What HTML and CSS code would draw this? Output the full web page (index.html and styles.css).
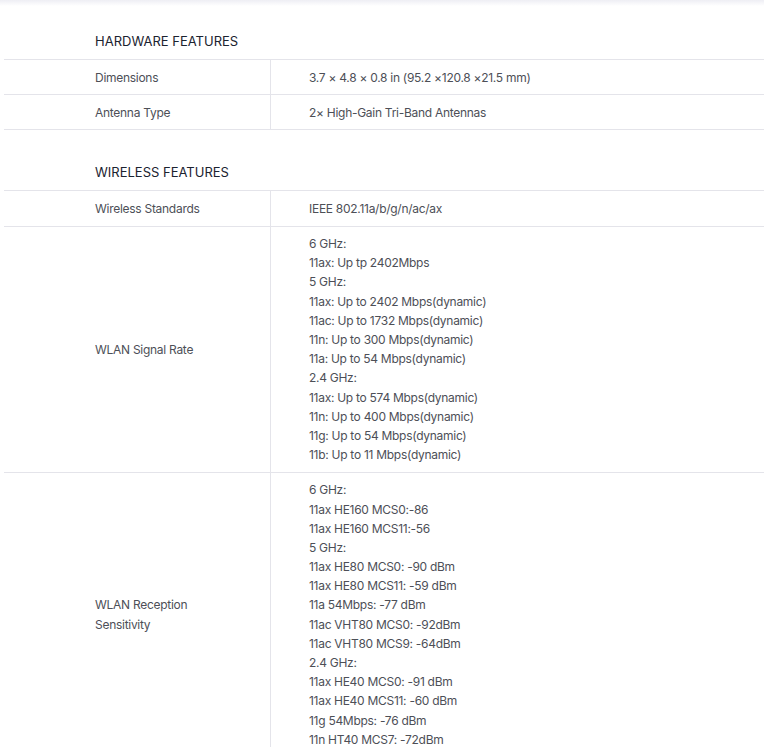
FILE: index.html
```html
<!DOCTYPE html>
<html lang="en">
<head>
    <meta charset="UTF-8">
    <meta name="viewport" content="width=device-width, initial-scale=1.0">
    <title>Specifications</title>
    <link rel="stylesheet" href="styles.css">
</head>
<body>
    <div class="top-shade"></div>
    <div class="specs">
        <section class="spec-group">
            <h3 class="spec-title">HARDWARE FEATURES</h3>
            <table class="spec-table">
                <tr>
                    <td class="spec-name">Dimensions</td>
                    <td class="spec-value">3.7 × 4.8 × 0.8 in (95.2 ×120.8 ×21.5 mm)</td>
                </tr>
                <tr>
                    <td class="spec-name">Antenna Type</td>
                    <td class="spec-value">2× High-Gain Tri-Band Antennas</td>
                </tr>
            </table>
        </section>

        <section class="spec-group">
            <h3 class="spec-title">WIRELESS FEATURES</h3>
            <table class="spec-table">
                <tr>
                    <td class="spec-name">Wireless Standards</td>
                    <td class="spec-value">IEEE 802.11a/b/g/n/ac/ax</td>
                </tr>
                <tr>
                    <td class="spec-name">WLAN Signal Rate</td>
                    <td class="spec-value">
                        6 GHz:<br>
                        11ax: Up tp 2402Mbps<br>
                        5 GHz:<br>
                        11ax: Up to 2402 Mbps(dynamic)<br>
                        11ac: Up to 1732 Mbps(dynamic)<br>
                        11n: Up to 300 Mbps(dynamic)<br>
                        11a: Up to 54 Mbps(dynamic)<br>
                        2.4 GHz:<br>
                        11ax: Up to 574 Mbps(dynamic)<br>
                        11n: Up to 400 Mbps(dynamic)<br>
                        11g: Up to 54 Mbps(dynamic)<br>
                        11b: Up to 11 Mbps(dynamic)
                    </td>
                </tr>
                <tr>
                    <td class="spec-name">WLAN Reception<br>Sensitivity</td>
                    <td class="spec-value">
                        6 GHz:<br>
                        11ax HE160 MCS0:-86<br>
                        11ax HE160 MCS11:-56<br>
                        5 GHz:<br>
                        11ax HE80 MCS0: -90 dBm<br>
                        11ax HE80 MCS11: -59 dBm<br>
                        11a 54Mbps: -77 dBm<br>
                        11ac VHT80 MCS0: -92dBm<br>
                        11ac VHT80 MCS9: -64dBm<br>
                        2.4 GHz:<br>
                        11ax HE40 MCS0: -91 dBm<br>
                        11ax HE40 MCS11: -60 dBm<br>
                        11g 54Mbps: -76 dBm<br>
                        11n HT40 MCS7: -72dBm
                    </td>
                </tr>
            </table>
        </section>
    </div>
</body>
</html>
```

FILE: styles.css
```css
body {
    margin: 0;
    background: #fff;
    font-family: Inter, "Noto Sans", sans-serif;
    font-size: 12px;
    color: #4d4f57;
    overflow: hidden;
}
.top-shade {
    height: 6px;
    background: linear-gradient(to bottom, #eeeef4 0%, #ffffff 100%);
}
.specs {
    margin-left: 4px;
}
.spec-group {
    padding-top: 25px;
}
.spec-group + .spec-group {
    padding-top: 32px;
}
.spec-title {
    margin: 0;
    padding: 0 0 8px 91px;
    font-size: 13px;
    font-weight: 400;
    line-height: 20px;
    color: #1b2330;
    border-bottom: 1px solid #e4e4ea;
}
.spec-table {
    width: 760px;
    border-collapse: collapse;
}
.spec-table td {
    padding: 7.5px 0;
    line-height: 1.6;
    letter-spacing: -0.28px;
    vertical-align: middle;
    border-bottom: 1px solid #e4e4ea;
}
.spec-name {
    width: 175px;
    padding-left: 91px !important;
    border-right: 1px solid #e4e4ea;
}
.spec-value {
    padding-left: 38px !important;
}
```
